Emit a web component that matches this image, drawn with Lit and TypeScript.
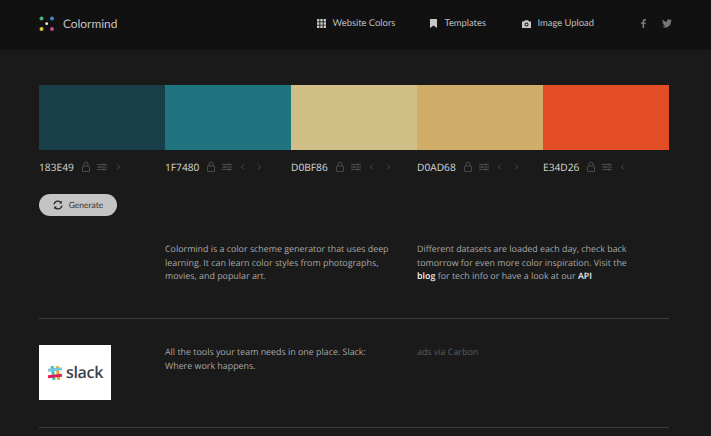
import { LitElement, html, css, svg } from "lit";
import { customElement } from "lit/decorators.js";

const lock = svg`<rect x="2.5" y="5" width="7" height="5.5" rx=".5" fill="none" stroke="currentColor"/><path d="M4 5V3.2a2 2 0 0 1 4 0V5" fill="none" stroke="currentColor"/>`;
const sliders = svg`<path d="M1 3.5h10M1 6h10M1 8.5h10" stroke="currentColor" fill="none"/><path d="M8 2.5v2M4 5v2M8 7.500v2" stroke="currentColor" stroke-width="1.500"/>`;
const left = svg`<path d="M7 3.5 4.5 6 7 8.5" fill="none" stroke="currentColor"/>`;
const right = svg`<path d="M5 3.5 7.5 6 5 8.5" fill="none" stroke="currentColor"/>`;

const colors = [
  { hex: "183E49", l: false, r: true },
  { hex: "1F7480", l: true, r: true },
  { hex: "D0BF86", l: true, r: true },
  { hex: "D0AD68", l: true, r: true },
  { hex: "E34D26", l: true, r: false },
];

@customElement("app-root")
export class AppRoot extends LitElement {
  static styles = css`
    :host { display: block; width: 711px; height: 436px; overflow: hidden; background: #1a1a1a; font-family: "Open Sans", sans-serif; color: #a8a8a8; text-rendering: geometricPrecision; }
    header { height: 50px; background: #111; display: flex; align-items: center; padding: 0 39px 3px; box-sizing: border-box; font-family: Lato, sans-serif; color: #bdbdbd; font-size: 9.4px; }
    .logo { display: flex; align-items: center; gap: 8px; font-size: 11.9px; color: #c4c4c4; flex: none; width: 277.5px; }
    .logo svg { display: block; }
    .nav { display: flex; align-items: center; }
    .nav a { display: flex; align-items: center; gap: 7px; white-space: nowrap; }
    .nav svg { display: block; fill: #c8c8c8; }
    .w { width: 113px; } .t { width: 92px; } .t svg { margin-right: 1px; } .i { width: 119px; }
    .social { display: flex; align-items: center; gap: 16px; }
    .social svg { display: block; fill: #777; }
    main { padding: 35px 42px 0 39px; }
    .palette { display: grid; grid-template-columns: repeat(5, 126px); }
    .swatch { height: 65px; }
    .label { display: flex; align-items: center; height: 34px; color: #4c4c4c; }
    .hex { color: #d8d8d8; font-size: 10.2px; margin-right: 6px; }
    .label svg { display: block; width: 12px; height: 12px; margin-right: 4px; }
    .generate { margin-top: 10px; width: 78px; height: 22px; border-radius: 11px; background: #c4c4c4; color: #333; display: flex; align-items: center; justify-content: center; gap: 6px; font-family: Lato, sans-serif; font-size: 8.5px; }
    .generate svg { display: block; }
    .cols { display: grid; grid-template-columns: 126px 252px 252px; font-size: 8.9px; line-height: 13.7px; }
    .about { margin-top: 26px; padding-bottom: 35px; border-bottom: 1px solid #3d3d3d; }
    .cols p { margin: 0; }
    b { color: #eee; font-weight: 600; }
    .about p { width: 226px; }
    .ad { padding: 26px 0 27px; border-bottom: 1px solid #3d3d3d; height: 55px; }
    .ad p { width: 226px; }
    .slack { width: 72px; height: 55px; background: #fff; display: flex; align-items: center; justify-content: center; gap: 3px; font-family: "Open Sans", sans-serif; font-weight: 600; font-size: 16px; color: #3b4250; letter-spacing: -.3px; }
    .slack svg { display: block; }
    .via { color: #5c5c5c; }
  `;

  render() {
    return html`
      <header>
        <div class="logo">
          <svg width="16" height="16" viewBox="0 0 16 16">
            <circle cx="2.5" cy="2.5" r="2" fill="#4fb07c"/><circle cx="13" cy="2.5" r="2" fill="#3f86c9"/>
            <circle cx="2.5" cy="13" r="2" fill="#d8c244"/><circle cx="13" cy="13" r="2" fill="#c9479a"/>
            <circle cx="7.7" cy="7.7" r="1.4" fill="#eee"/>
          </svg>
          <span>Colormind</span>
        </div>
        <nav class="nav">
          <a class="w"><svg width="9" height="9" viewBox="0 0 9 9"><path d="M0 0h2.4v2.4H0zM3.3 0h2.4v2.4H3.3zM6.6 0H9v2.4H6.6zM0 3.3h2.4v2.4H0zM3.3 3.3h2.4v2.4H3.3zM6.6 3.3H9v2.4H6.6zM0 6.6h2.4V9H0zM3.3 6.6h2.4V9H3.3zM6.6 6.6H9V9H6.6z"/></svg>Website Colors</a>
          <a class="t"><svg width="7" height="9" viewBox="0 0 7 9"><path d="M0 0h7v9L3.5 6.5 0 9z"/></svg>Templates</a>
          <a class="i"><svg width="9" height="8" viewBox="0 0 9 8"><path fill-rule="evenodd" d="M0 1.5h2L3 .3h3l1 1.2h2V8H0zM4.5 2.6a2 2 0 1 0 0 4 2 2 0 0 0 0-4z"/><circle cx="4.5" cy="4.6" r="1.1"/></svg>Image Upload</a>
        </nav>
        <div class="social">
          <svg width="5" height="9" viewBox="0 0 5 9"><path d="M1.5 9V5H0V3.4h1.5V2.2C1.5.7 2.4 0 3.6 0H5v1.6H4c-.6 0-.8.3-.8.8v1h1.7L4.7 5H3.2v4z"/></svg>
          <svg width="10" height="9" viewBox="0 0 24 20"><path d="M24 2.400a10 10 0 0 1-2.800.8A5 5 0 0 0 23.300.5a10 10 0 0 1-3.100 1.200 4.900 4.900 0 0 0-8.400 4.500A14 14 0 0 1 1.700.9a4.900 4.900 0 0 0 1.500 6.600 4.900 4.900 0 0 1-2.200-.6 4.900 4.900 0 0 0 3.900 4.900 5 5 0 0 1-2.200.1 4.900 4.900 0 0 0 4.600 3.400A9.900 9.900 0 0 1 0 17.300 14 14 0 0 0 21.500 5 10 10 0 0 0 24 2.400z"/></svg>
        </div>
      </header>
      <main>
        <div class="palette">
          ${colors.map((c) => html`<div class="swatch" style="background:#${c.hex}"></div>`)}
          ${colors.map((c) => html`<div class="label">
            <span class="hex">${c.hex}</span>
            <svg viewBox="0 0 12 12">${lock}</svg>
            <svg viewBox="0 0 12 12">${sliders}</svg>
            ${c.l ? html`<svg viewBox="0 0 12 12">${left}</svg>` : ""}
            ${c.r ? html`<svg viewBox="0 0 12 12">${right}</svg>` : ""}
          </div>`)}
        </div>
        <div class="generate">
          <svg width="10" height="10" viewBox="0 0 10 10"><path d="M1 4.300A4 4 0 0 1 8 2.500M9 5.700A4 4 0 0 1 2 7.500" fill="none" stroke="#222" stroke-width="1.300"/><path d="M8.800.7v2.800H6zM1.200 9.300V6.500H4z" fill="#222"/></svg>
          <span>Generate</span>
        </div>
        <div class="cols about">
          <div></div>
          <p>Colormind is a color scheme generator that uses deep learning. It can learn color styles from photographs, movies, and popular art.</p>
          <p>Different datasets are loaded each day, check back tomorrow for even more color inspiration. Visit the <b>blog</b> for tech info or have a look at our <b>API</b></p>
        </div>
        <div class="cols ad">
          <div class="slack">
            <svg width="16" height="16" viewBox="0 0 15 15">
              <path d="M4.800 1 6.500 14" stroke="#3ec5a0" stroke-width="2.800"/>
              <path d="M9.500 1 11 14" stroke="#e9a820" stroke-width="2.800"/>
              <path d="M1 5 14 3.600" stroke="#72c7e0" stroke-width="2.800"/>
              <path d="M1 11 14 9.600" stroke="#e01e5a" stroke-width="2.800"/>
            </svg>
            <span>slack</span>
          </div>
          <p>All the tools your team needs in one place. Slack: Where work happens.</p>
          <p class="via">ads via Carbon</p>
        </div>
      </main>
    `;
  }
}
